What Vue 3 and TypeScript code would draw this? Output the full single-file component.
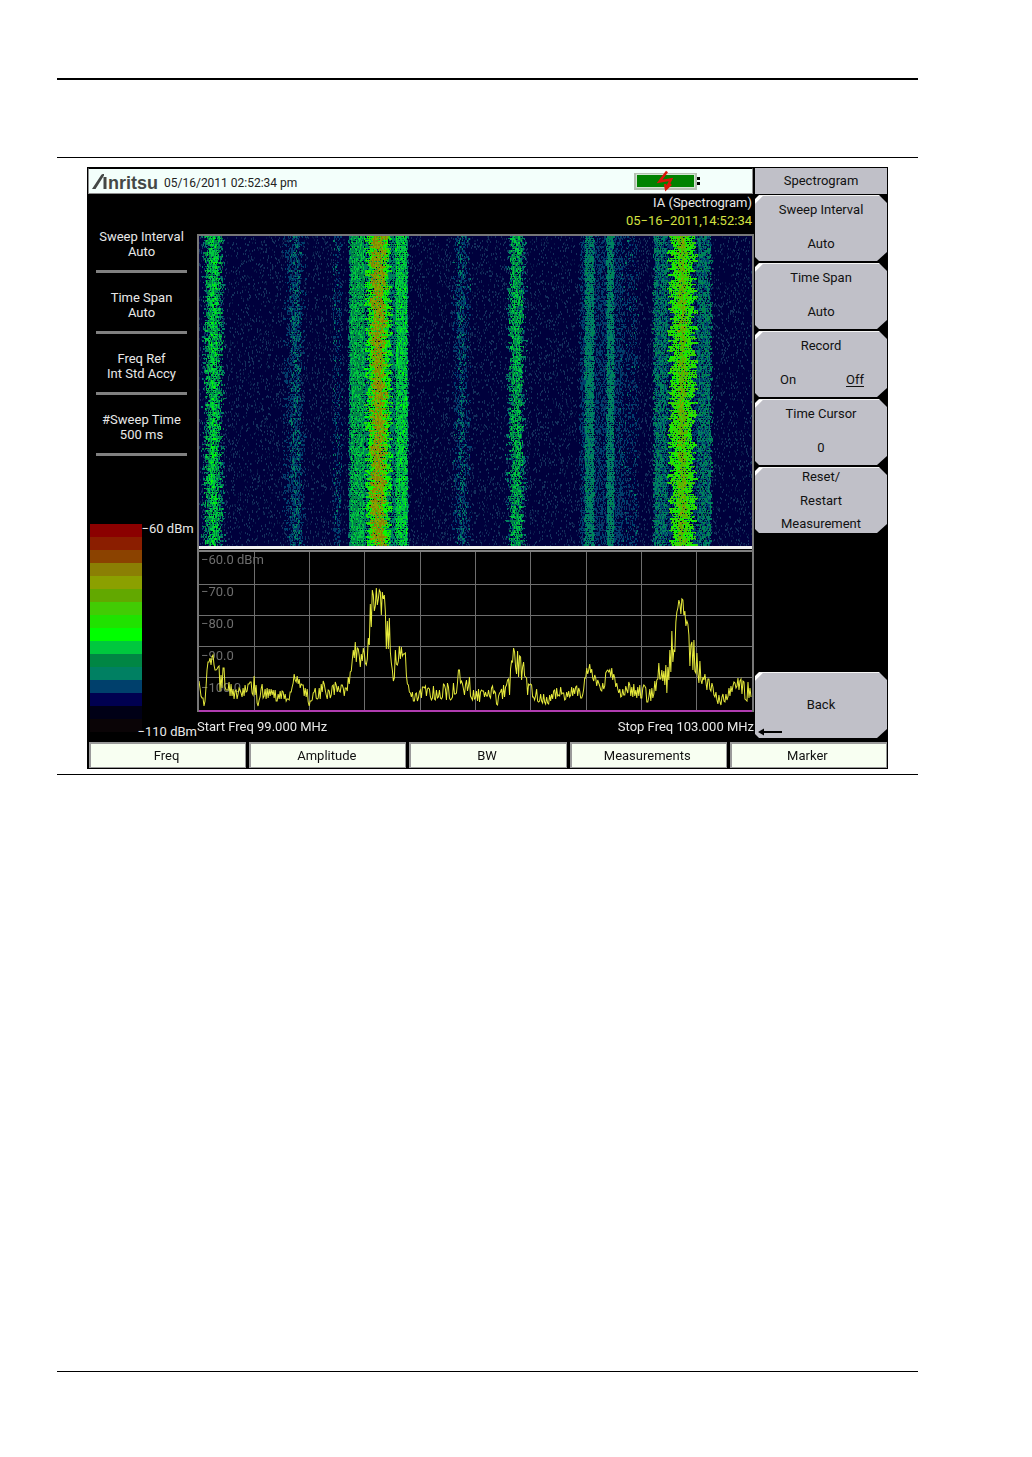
<script setup lang="ts">
import { onMounted, ref } from 'vue'

interface SoftKey {
  lines: string[]
}

interface Band {
  center: number
  half: number
  jitter: number
  level: number
  noise: number
  density: number
}

const readouts: { label: string; value: string }[] = [
  { label: 'Sweep Interval', value: 'Auto' },
  { label: 'Time Span', value: 'Auto' },
  { label: 'Freq Ref', value: 'Int Std Accy' },
  { label: '#Sweep Time', value: '500 ms' },
]

const keysBeforeRecord: SoftKey[] = [
  { lines: ['Sweep Interval', 'Auto'] },
  { lines: ['Time Span', 'Auto'] },
]

const menus: string[] = ['Freq', 'Amplitude', 'BW', 'Measurements', 'Marker']
const levels: string[] = ['−60.0 dBm', '−70.0', '−80.0', '−90.0', '−100.0']

const palette: string[] = [
  '#8b0000', '#8b1e00', '#8b4200', '#8b7f04', '#8ba000', '#62a800', '#42cc04', '#20e200',
  '#00ff00', '#00c83e', '#008644', '#008062', '#00406c', '#000050', '#000016', '#0a0406',
]

function seeded(seed: number): () => number {
  let s = seed
  return () => {
    s = (s * 1664525 + 1013904223) >>> 0
    return s / 4294967296
  }
}

const PLOT_W = 552
const WATERFALL_H = 310

// Envelope of the live sweep: x, mean height, spread
const envelope: number[][] = [
  [0, 127, 2], [3, 149, 4], [6, 150, 3], [8, 117, 3], [9, 107, 4], [14, 109, 6], [19, 111, 8],
  [21, 131, 8], [25, 127, 12], [29, 135, 8], [34, 142, 6], [41, 140, 6], [50, 136, 6], [55, 135, 9],
  [58, 146, 8], [63, 139, 7], [71, 141, 5], [81, 145, 5], [91, 143, 4], [93, 131, 4], [95, 124, 3],
  [101, 131, 4], [106, 141, 5], [110, 146, 7], [117, 142, 6], [124, 137, 7], [128, 143, 4],
  [137, 135, 6], [147, 141, 5], [151, 122, 6], [153, 106, 4], [156, 100, 9], [161, 109, 8],
  [164, 102, 6], [168, 111, 4], [170, 77, 14], [173, 55, 18], [176, 46, 16], [179, 43, 9],
  [182, 52, 12], [184, 38, 10], [186, 77, 20], [189, 82, 20], [192, 87, 22], [194, 132, 8],
  [196, 107, 8], [200, 102, 8], [205, 98, 6], [208, 125, 8], [213, 145, 5], [219, 144, 5],
  [226, 139, 6], [231, 140, 8], [237, 143, 6], [246, 140, 8], [253, 138, 8], [257, 137, 6],
  [259, 121, 5], [264, 139, 6], [269, 130, 9], [272, 142, 6], [281, 144, 6], [287, 141, 5],
  [294, 139, 8], [298, 151, 4], [303, 140, 6], [310, 135, 8], [312, 112, 8], [314, 98, 5],
  [316, 109, 13], [319, 115, 14], [322, 123, 14], [325, 115, 8], [328, 137, 6], [336, 141, 7],
  [346, 148, 5], [353, 143, 5], [361, 141, 5], [363, 147, 6], [373, 139, 5], [383, 141, 5],
  [386, 121, 4], [390, 115, 4], [395, 127, 6], [401, 139, 3], [406, 127, 6], [412, 119, 5],
  [416, 132, 5], [421, 141, 5], [428, 135, 6], [436, 141, 6], [446, 141, 9], [451, 143, 6],
  [457, 131, 5], [459, 117, 6], [463, 123, 12], [467, 127, 14], [470, 107, 16], [474, 92, 18],
  [477, 77, 16], [479, 62, 14], [482, 51, 4], [485, 57, 8], [487, 82, 15], [491, 102, 18],
  [495, 112, 22], [498, 117, 14], [501, 119, 10], [506, 127, 8], [511, 135, 8], [517, 145, 6],
  [521, 149, 5], [527, 144, 5], [533, 137, 5], [537, 131, 6], [543, 137, 9], [552, 142, 8],
]

function sweepPoints(): string {
  const rand = seeded(4127)
  const points: string[] = []
  let seg = 0
  let side = 1
  for (let x = 0; x <= PLOT_W - 1; x += 1) {
    while (seg < envelope.length - 2 && x > envelope[seg + 1][0]) seg += 1
    const [x0, y0, a0] = envelope[seg]
    const [x1, y1, a1] = envelope[seg + 1]
    const t = (x - x0) / (x1 - x0)
    const amp = a0 + (a1 - a0) * t
    if (rand() < 0.6) side = -side
    const y = y0 + (y1 - y0) * t + side * amp * (0.3 + rand() * 0.9)
    points.push(`${x},${Math.min(155, Math.round(y))}`)
  }
  return points.join(' ')
}

const sweep = sweepPoints()

const bands: Band[] = [
  { center: 14, half: 8, jitter: 4, level: 11, noise: 0.8, density: 0.6 },
  { center: 14, half: 5, jitter: 4, level: 9.5, noise: 1, density: 0.9 },
  { center: 14, half: 1, jitter: 3, level: 8.7, noise: 0.6, density: 0.6 },
  { center: 95, half: 7, jitter: 5, level: 12, noise: 0.3, density: 0.45 },
  { center: 96, half: 3, jitter: 3, level: 11.4, noise: 0.7, density: 0.5 },
  { center: 138, half: 3, jitter: 2, level: 12, noise: 0.7, density: 0.4 },
  { center: 179, half: 29, jitter: 1, level: 11, noise: 0.6, density: 0.85 },
  { center: 158, half: 6, jitter: 1, level: 9.6, noise: 0.9, density: 0.95 },
  { center: 202, half: 5, jitter: 1, level: 9, noise: 0.7, density: 0.97 },
  { center: 179, half: 10, jitter: 4, level: 7.6, noise: 1.3, density: 0.97 },
  { center: 179, half: 5, jitter: 4, level: 3.6, noise: 1.1, density: 0.95 },
  { center: 262, half: 6, jitter: 4, level: 12, noise: 0.6, density: 0.45 },
  { center: 262, half: 2, jitter: 2, level: 11.4, noise: 0.6, density: 0.35 },
  { center: 316, half: 6, jitter: 5, level: 11.2, noise: 0.8, density: 0.65 },
  { center: 316, half: 4, jitter: 3, level: 9.6, noise: 0.9, density: 0.85 },
  { center: 401, half: 20, jitter: 2, level: 12, noise: 0.3, density: 0.5 },
  { center: 389, half: 4, jitter: 1, level: 11, noise: 0.6, density: 0.97 },
  { center: 410, half: 3, jitter: 1, level: 11, noise: 0.6, density: 0.97 },
  { center: 428, half: 8, jitter: 3, level: 12, noise: 0.6, density: 0.3 },
  { center: 482, half: 27, jitter: 1, level: 12, noise: 0.4, density: 0.65 },
  { center: 460, half: 6, jitter: 2, level: 11, noise: 0.8, density: 0.8 },
  { center: 504, half: 6, jitter: 2, level: 11, noise: 0.8, density: 0.75 },
  { center: 482, half: 10, jitter: 5, level: 6.8, noise: 1, density: 0.98 },
  { center: 482, half: 2, jitter: 3, level: 5, noise: 0.7, density: 0.85 },
]

const waterfall = ref<HTMLCanvasElement | null>(null)

onMounted(() => {
  const ctx = waterfall.value?.getContext('2d')
  if (!ctx) return
  const rand = seeded(90210)
  ctx.fillStyle = '#00003c'
  ctx.fillRect(0, 0, PLOT_W, WATERFALL_H)
  // Background speckle is two sweeps tall
  for (let i = 0; i < 15000; i += 1) {
    ctx.fillStyle = rand() < 0.6 ? '#14305c' : '#08184a'
    ctx.fillRect(Math.floor(rand() * PLOT_W), Math.floor(rand() * WATERFALL_H), 1, 2)
  }
  for (const band of bands) {
    for (let y = 0; y < WATERFALL_H; y += 2) {
      const left = Math.round(band.center - band.half - band.jitter * (rand() * 1.6 - 0.6))
      const right = Math.round(band.center + band.half + band.jitter * (rand() * 1.6 - 0.6))
      for (let x = Math.max(0, left); x <= right; x += 1) {
        if (rand() > band.density) continue
        const level = Math.round(band.level + (rand() * 2 - 1) * band.noise)
        ctx.fillStyle = palette[Math.min(13, Math.max(2, level))]
        ctx.fillRect(x, y, 1, rand() < 0.7 ? 2 : 1)
      }
    }
  }
})
</script>

<template>
  <div class="page">
    <header class="page-head"></header>
    <main class="figure">
      <section class="device">
        <div class="top">
          <div class="status">
            <div class="logo" role="img" aria-label="Anritsu">
              <svg class="mark" width="16" height="15" viewBox="0 0 16 15">
                <path d="M0 15 L9 1.2 Q9.8 0 11.2 0 L12 0 L12 1.5 L3.5 15 Z M11.500 3 H14.500 V15 H11.500 Z" fill="#444846" />
              </svg>
              <span>nritsu</span>
            </div>
            <time class="clock">05/16/2011 02:52:34 pm</time>
            <svg class="battery" width="68" height="22" viewBox="0 0 68 22">
              <rect x="0" y="3" width="63" height="17" fill="#b4c0b2" />
              <rect x="2.500" y="4.500" width="58" height="13" fill="#008200" stroke="#d5e4d4" />
              <path d="M33 1.500 L25.500 11.500 L37 9.500 L32.500 18 M31 14 L32 19 L37 14" fill="none" stroke="#dc1408" stroke-width="2.500" />
              <path d="M63 7h3v3h-3zM63 12h3v3h-3z" fill="#000" />
            </svg>
          </div>
          <h1 class="menu-title">Spectrogram</h1>
        </div>

        <div class="body">
          <aside class="side">
            <dl class="readouts">
              <div v-for="item in readouts" :key="item.label" class="readout">
                <dt>{{ item.label }}</dt>
                <dd>{{ item.value }}</dd>
              </div>
            </dl>
            <div class="scale">
              <div class="swatches">
                <i v-for="color in palette" :key="color" :style="{ background: color }"></i>
              </div>
              <div class="scale-labels">
                <span>−60 dBm</span>
                <span class="low">−110 dBm</span>
              </div>
            </div>
          </aside>

          <div class="center">
            <div class="mode">
              <span>IA (Spectrogram)</span>
              <time class="stamp">05−16−2011,14:52:34</time>
            </div>
            <div class="frame">
              <canvas ref="waterfall" class="waterfall" :width="PLOT_W" :height="WATERFALL_H"></canvas>
              <div class="cursor"></div>
              <div class="trace">
                <svg width="100%" height="158" viewBox="0 0 552 158" preserveAspectRatio="none">
                  <g stroke="#6e6e6e" stroke-width="1" shape-rendering="crispEdges">
                    <line v-for="n in 9" :key="'v' + n" :x1="n * 55.2" :x2="n * 55.2" y1="0" y2="158" />
                    <line v-for="n in 4" :key="'h' + n" x1="0" x2="552" :y1="n * 31 + 1" :y2="n * 31 + 1" />
                  </g>
                </svg>
                <div class="levels">
                  <span v-for="level in levels" :key="level">{{ level }}</span>
                </div>
                <svg class="sweep" width="100%" height="158" viewBox="0 0 552 158" preserveAspectRatio="none">
                  <polyline :points="sweep" fill="none" stroke="#e6ea3c" stroke-width="1" />
                </svg>
              </div>
            </div>
            <div class="range">
              <span>Start Freq 99.000 MHz</span>
              <span>Stop Freq 103.000 MHz</span>
            </div>
          </div>

          <nav class="keys">
            <button v-for="key in keysBeforeRecord" :key="key.lines[0]" type="button" class="key">
              <span v-for="line in key.lines" :key="line">{{ line }}</span>
            </button>
            <button type="button" class="key">
              <span>Record</span>
              <span class="toggle"><span>On</span><u>Off</u></span>
            </button>
            <button type="button" class="key">
              <span>Time Cursor</span>
              <span>0</span>
            </button>
            <button type="button" class="key triple">
              <span>Reset/</span>
              <span>Restart</span>
              <span>Measurement</span>
            </button>
            <button type="button" class="key back">
              <span>Back</span>
              <svg class="arrow" width="25" height="8" viewBox="0 0 25 8">
                <path d="M0 4 L6 0.500 V3 H24 V5 H6 V7.500 Z" fill="#000" />
              </svg>
            </button>
          </nav>
        </div>

        <nav class="menus">
          <button v-for="menu in menus" :key="menu" type="button">{{ menu }}</button>
        </nav>
      </section>
    </main>
    <footer class="page-foot"></footer>
  </div>
</template>

<style>
body {
  background: #fff;
}
</style>

<style scoped>
* {
  box-sizing: border-box;
}

.page {
  display: flex;
  flex-direction: column;
  min-height: 100vh;
  padding: 78px 114px 85px 57px;
  font-family: Roboto, "Liberation Sans", sans-serif;
  font-size: 13px;
  line-height: 15px;
}

.page-head {
  height: 79px;
  border-top: 2px solid #000;
}

.page-foot {
  margin-top: auto;
  border-top: 1px solid #000;
}

.figure {
  padding: 9px 30px 5px;
  border-top: 1px solid #000;
  border-bottom: 1px solid #000;
}

.device {
  background: #000;
  color: #e8e8e8;
}

.top {
  display: flex;
  gap: 2px;
  height: 28px;
  padding: 1px 1px 0;
}

.status {
  display: flex;
  flex: 1;
  align-items: center;
  height: 26px;
  padding: 0 50px 0 3px;
  border: 1px solid #8c8c8c;
  border-top-color: #000;
  background: #f3fffb;
  color: #222;
}

.logo {
  display: flex;
  align-items: flex-end;
  width: 72px;
  color: #444846;
  font-family: "Liberation Sans", sans-serif;
  font-size: 18px;
  font-weight: bold;
}

.logo span {
  line-height: 12px;
}

.clock {
  flex: 1;
  padding-top: 5px;
  font-size: 12px;
}

.menu-title {
  width: 132px;
  height: 26px;
  margin: 0;
  background: #c0c0c8;
  color: #111;
  font-size: 13px;
  font-weight: normal;
  line-height: 26px;
  text-align: center;
}

.body {
  display: flex;
  height: 546px;
}

.side {
  display: flex;
  flex-direction: column;
  justify-content: space-between;
  width: 110px;
  padding: 34px 0 2px;
}

.readouts {
  display: flex;
  flex-direction: column;
  gap: 18px;
  margin: 0;
  padding: 0 10px 0 9px;
  text-align: center;
}

.readout {
  padding-bottom: 11px;
  border-bottom: 3px solid #808080;
}

.readouts {
  gap: 17px;
}

.readout dd {
  margin: 0;
}

.scale {
  display: flex;
  height: 218px;
  padding-left: 3px;
}

.swatches {
  width: 53px;
  padding-top: 3px;
}

.swatches i {
  display: block;
  height: 13px;
}

.scale-labels {
  display: flex;
  flex-direction: column;
  justify-content: space-between;
  white-space: nowrap;
}

.low {
  margin-left: -4px;
}

.center {
  display: flex;
  flex: 1;
  flex-direction: column;
  min-width: 0;
}

.mode {
  display: flex;
  flex-direction: column;
  gap: 3px;
  align-items: flex-end;
  height: 39px;
  padding-right: 2px;
}

.stamp {
  color: #d4e040;
}

.frame {
  border: 2px solid #777;
  border-bottom: 0;
}

.waterfall {
  display: block;
  width: 100%;
  height: 310px;
  image-rendering: pixelated;
}

.cursor {
  height: 6px;
  border-top: 3px solid #f0f0f0;
  border-bottom: 2px solid #808080;
}

.trace {
  position: relative;
  height: 160px;
  border-bottom: 2px solid #b03cb0;
}

.trace svg {
  display: block;
}

.levels {
  position: absolute;
  inset: 0;
  display: flex;
  flex-direction: column;
  gap: 17px;
  padding: 0 2px;
  color: #6e6e6e;
}

.trace .sweep {
  position: absolute;
  inset: 0;
}

.range {
  display: flex;
  justify-content: space-between;
  padding-top: 7px;
}

.keys {
  display: flex;
  flex-direction: column;
  gap: 1px;
  width: 134px;
  padding: 0 1px 2px 1px;
}

.key {
  display: flex;
  flex-direction: column;
  align-items: center;
  justify-content: space-between;
  height: 67px;
  padding: 6px 0 11px;
  border: 0;
  border-top: 1px solid #f4f4f4;
  background: linear-gradient(135deg, #fff 5px, #c0c0c8 6px);
  color: #111;
  font: inherit;
  clip-path: polygon(4px 0, calc(100% - 8px) 0, 100% 8px, 100% calc(100% - 10px), calc(100% - 10px) calc(100% - 1px), 4px calc(100% - 1px), 0 calc(100% - 5px), 0 4px);
}

.toggle {
  display: flex;
  justify-content: space-between;
  align-self: stretch;
  padding: 0 23px 0 25px;
}

.toggle u {
  text-underline-offset: 2px;
}

.triple {
  padding: 1px 0 3px;
}

.back {
  position: relative;
  justify-content: center;
  margin-top: auto;
  padding: 0 0 4px;
}

.arrow {
  position: absolute;
  bottom: 3px;
  left: 3px;
}

.menus {
  display: flex;
  gap: 3px;
  padding: 1px 1px 1px 2px;
}

.menus button {
  flex: 1;
  height: 26px;
  padding: 0 3px 0 0;
  border: 1px solid #9a9a9a;
  border-width: 2px 1px 1px 2px;
  background: #f8fff2;
  color: #111;
  font: inherit;
}
</style>
